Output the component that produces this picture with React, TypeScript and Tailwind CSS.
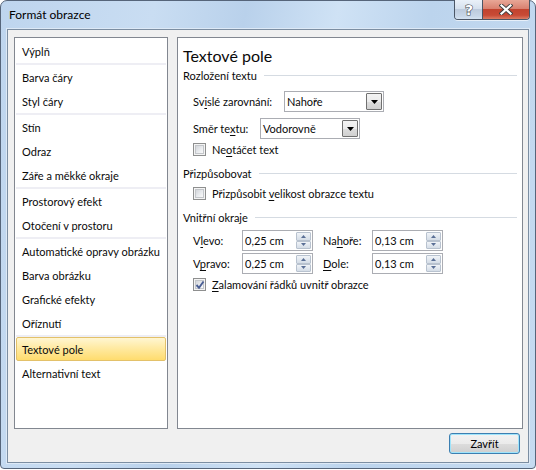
import React from "react";

function U({ children }: { children: React.ReactNode }) {
  return <span className="underline underline-offset-[2px] decoration-[1px]">{children}</span>;
}

function CheckBox({ checked }: { checked?: boolean }) {
  return (
    <div className="relative w-[13px] h-[13px] shrink-0 border border-[#8e8f8f] bg-[#f4f4f4] p-[1px]">
      <div className="w-full h-full border border-[#c3c6ca] bg-[linear-gradient(135deg,#d3d6da_0%,#e9ebee_55%,#fafafa_100%)]" />
      {checked && (
        <svg className="absolute left-[1px] top-[1px]" width="10" height="10" viewBox="0 0 10 10">
          <path d="M1.5 5 L4 7.8 L8.5 1.5" fill="none" stroke="#4a5e94" strokeWidth="1.9" />
        </svg>
      )}
    </div>
  );
}

function Combo({ value }: { value: string }) {
  return (
    <div className="w-[100px] h-[21px] shrink-0 border border-[#abadb3] bg-white flex items-stretch p-[1px]">
      <span className="flex-1 pl-[1px] flex items-center">{value}</span>
      <div className="w-[16px] border border-[#707070] rounded-[1px] bg-[linear-gradient(180deg,#f3f3f3_0%,#ebebeb_50%,#dddddd_51%,#d0d0d0_100%)] flex items-center justify-center">
        <svg width="7" height="4" viewBox="0 0 7 4">
          <path d="M0 0H7L3.5 4Z" fill="#000" />
        </svg>
      </div>
    </div>
  );
}

function SpinBtn({ up }: { up?: boolean }) {
  return (
    <div className="flex-1 border border-[#b8c2cf] rounded-[1px] bg-[linear-gradient(180deg,#f1f4f8_0%,#e2e8ef_50%,#d5dde7_100%)] flex items-center justify-center">
      <svg width="5" height="3" viewBox="0 0 5 3">
        {up ? <path d="M0 3H5L2.5 0Z" fill="#5a6f96" /> : <path d="M0 0H5L2.5 3Z" fill="#5a6f96" />}
      </svg>
    </div>
  );
}

function Spin({ value }: { value: string }) {
  return (
    <div className="w-[71px] h-[21px] shrink-0 border border-[#abadb3] bg-white flex items-stretch">
      <span className="flex-1 pl-[2px] flex items-center">{value}</span>
      <div className="w-[16px] flex flex-col py-[1px] pr-[1px]">
        <SpinBtn up />
        <SpinBtn />
      </div>
    </div>
  );
}

function GroupHeader({ children, className }: { children: React.ReactNode; className?: string }) {
  return (
    <div className={"h-[16px] flex items-center " + (className ?? "")}>
      <span className="whitespace-nowrap">{children}</span>
      <div className="flex-1 h-px ml-[7px] bg-[#d5dbe2]" />
    </div>
  );
}

const groups: string[][] = [
  ["Výplň"],
  ["Barva čáry", "Styl čáry"],
  ["Stín", "Odraz", "Záře a měkké okraje"],
  ["Prostorový efekt", "Otočení v prostoru"],
  ["Automatické opravy obrázku", "Barva obrázku", "Grafické efekty", "Oříznutí"],
  ["Textové pole", "Alternativní text"],
];

function NavList() {
  return (
    <div className="w-[154px] h-full shrink-0 border border-[#828790] bg-white pt-[1px] flex flex-col">
      {groups.map((g, gi) => (
        <React.Fragment key={gi}>
          {gi > 0 && <div className="h-[2px] mx-[1px] bg-[#eeeef4]" />}
          {g.map((item) => {
            const sel = item === "Textové pole";
            return (
              <div
                key={item}
                className={
                  sel
                    ? "h-[24px] mx-[1px] pl-[5px] flex items-center whitespace-nowrap border border-[#e3c16a] rounded-[2px] bg-[linear-gradient(180deg,#fff6d2_0%,#ffeaa3_45%,#ffdc6e_100%)]"
                    : "h-[24px] mx-[1px] pl-[5px] flex items-center whitespace-nowrap border border-transparent"
                }
              >
                {item}
              </div>
            );
          })}
        </React.Fragment>
      ))}
    </div>
  );
}

function ContentPanel() {
  return (
    <div className="w-[346px] h-full shrink-0 border border-[#828790] bg-white px-[5px] pt-[6px] flex flex-col">
      <div className="h-[23px] flex items-center text-[16px]">Textové pole</div>
      <GroupHeader>Rozložení textu</GroupHeader>
      <div className="mt-[8px] h-[21px] pl-[10px] flex items-center">
        <span className="w-[91px] shrink-0">
          Sv<U>i</U>slé zarovnání:
        </span>
        <Combo value="Nahoře" />
      </div>
      <div className="mt-[6px] h-[21px] pl-[10px] flex items-center">
        <span className="w-[67px] shrink-0">
          Směr te<U>x</U>tu:
        </span>
        <Combo value="Vodorovně" />
      </div>
      <div className="mt-[2px] h-[16px] pl-[10px] flex items-center">
        <CheckBox />
        <span className="ml-[6px]">
          Ne<U>o</U>táčet text
        </span>
      </div>
      <GroupHeader className="mt-[8px]">Přizpůsobovat</GroupHeader>
      <div className="mt-[4px] h-[16px] pl-[10px] flex items-center">
        <CheckBox />
        <span className="ml-[6px]">
          Přizpůsobit <U>v</U>elikost obrazce textu
        </span>
      </div>
      <GroupHeader className="mt-[8px]">Vnitřní okraje</GroupHeader>
      <div className="mt-[5px] h-[21px] pl-[10px] flex items-center">
        <span className="w-[49px] shrink-0">
          V<U>l</U>evo:
        </span>
        <Spin value="0,25 cm" />
        <span className="w-[49px] shrink-0 ml-[10px]">
          Na<U>h</U>oře:
        </span>
        <Spin value="0,13 cm" />
      </div>
      <div className="mt-[2px] h-[21px] pl-[10px] flex items-center">
        <span className="w-[49px] shrink-0">
          V<U>p</U>ravo:
        </span>
        <Spin value="0,25 cm" />
        <span className="w-[49px] shrink-0 ml-[10px]">
          <U>D</U>ole:
        </span>
        <Spin value="0,13 cm" />
      </div>
      <div className="mt-[2px] h-[16px] pl-[10px] flex items-center">
        <CheckBox checked />
        <span className="ml-[6px]">
          <U>Z</U>alamování řádků uvnitř obrazce
        </span>
      </div>
    </div>
  );
}

function CaptionButtons() {
  return (
    <div className="absolute top-[-1px] right-[5px] h-[20px] flex border border-t-0 border-[#4a5666] rounded-b-[4px] overflow-hidden shadow-[0_1px_0_rgba(255,255,255,0.6)]">
      <div className="w-[28px] h-full flex items-center justify-center border-r border-[#4a5666] bg-[linear-gradient(180deg,#eaf1f9_0%,#d6e1ee_45%,#bdcbdd_50%,#c8d7e8_85%,#d6e4f2_100%)]">
        <svg width="12" height="15" viewBox="0 0 12 15">
          <text
            x="6"
            y="13"
            textAnchor="middle"
            fontFamily="'DejaVu Sans', sans-serif"
            fontWeight="bold"
            fontSize="14"
            fill="#ffffff"
            stroke="#4a4f57"
            strokeWidth="1.2"
            paintOrder="stroke"
          >
            ?
          </text>
        </svg>
      </div>
      <div className="w-[46px] h-full flex items-center justify-center bg-[linear-gradient(180deg,#e8a797_0%,#d98170_45%,#c2432f_50%,#c84a35_80%,#dc7c64_100%)]">
        <svg width="14" height="11" viewBox="0 0 14 11">
          <path d="M2.5 1.5 L11.5 9.5 M11.5 1.5 L2.5 9.5" stroke="#3f3f3f" strokeWidth="4" strokeLinecap="square" />
          <path d="M2.5 1.5 L11.5 9.5 M11.5 1.5 L2.5 9.5" stroke="#ffffff" strokeWidth="2.2" strokeLinecap="square" />
        </svg>
      </div>
    </div>
  );
}

export default function App() {
  return (
    <div className="w-[536px] h-[470px] bg-white font-['Lato',sans-serif] text-[11px] leading-none text-[#0a0a0a]">
      <div className="relative w-[536px] h-[469px] rounded-t-[7px] rounded-b-[4px] border border-[#56657a] bg-[linear-gradient(100deg,#bed5ee_0%,#c9ddf2_25%,#b9d1eb_40%,#cfe2f5_55%,#bcd4ed_70%,#c6dbf1_100%)] px-[6px] pb-[5px] flex flex-col">
        <div className="h-[28px] shrink-0 flex items-center pl-[2px] pb-[1px] text-[12px] text-black">
          Formát obrazce
        </div>
        <CaptionButtons />
        <div className="flex-1 border border-[#7c8ea2] bg-[#f0f0f0] shadow-[0_0_0_1px_#dde9f6] pt-[7px] pl-[6px] pr-[5px] flex flex-col">
          <div className="h-[392px] flex gap-[9px]">
            <NavList />
            <ContentPanel />
          </div>
          <div className="mt-[4px] pr-[3px] flex justify-end">
            <button className="w-[71px] h-[21px] rounded-[3px] border border-[#3c7fb1] bg-[linear-gradient(180deg,#f2f2f2_0%,#ebebeb_50%,#dddddd_51%,#cfcfcf_100%)] shadow-[inset_0_0_0_1px_#9fe4fb] flex items-center justify-center text-black">
              Zavřít
            </button>
          </div>
        </div>
      </div>
    </div>
  );
}
